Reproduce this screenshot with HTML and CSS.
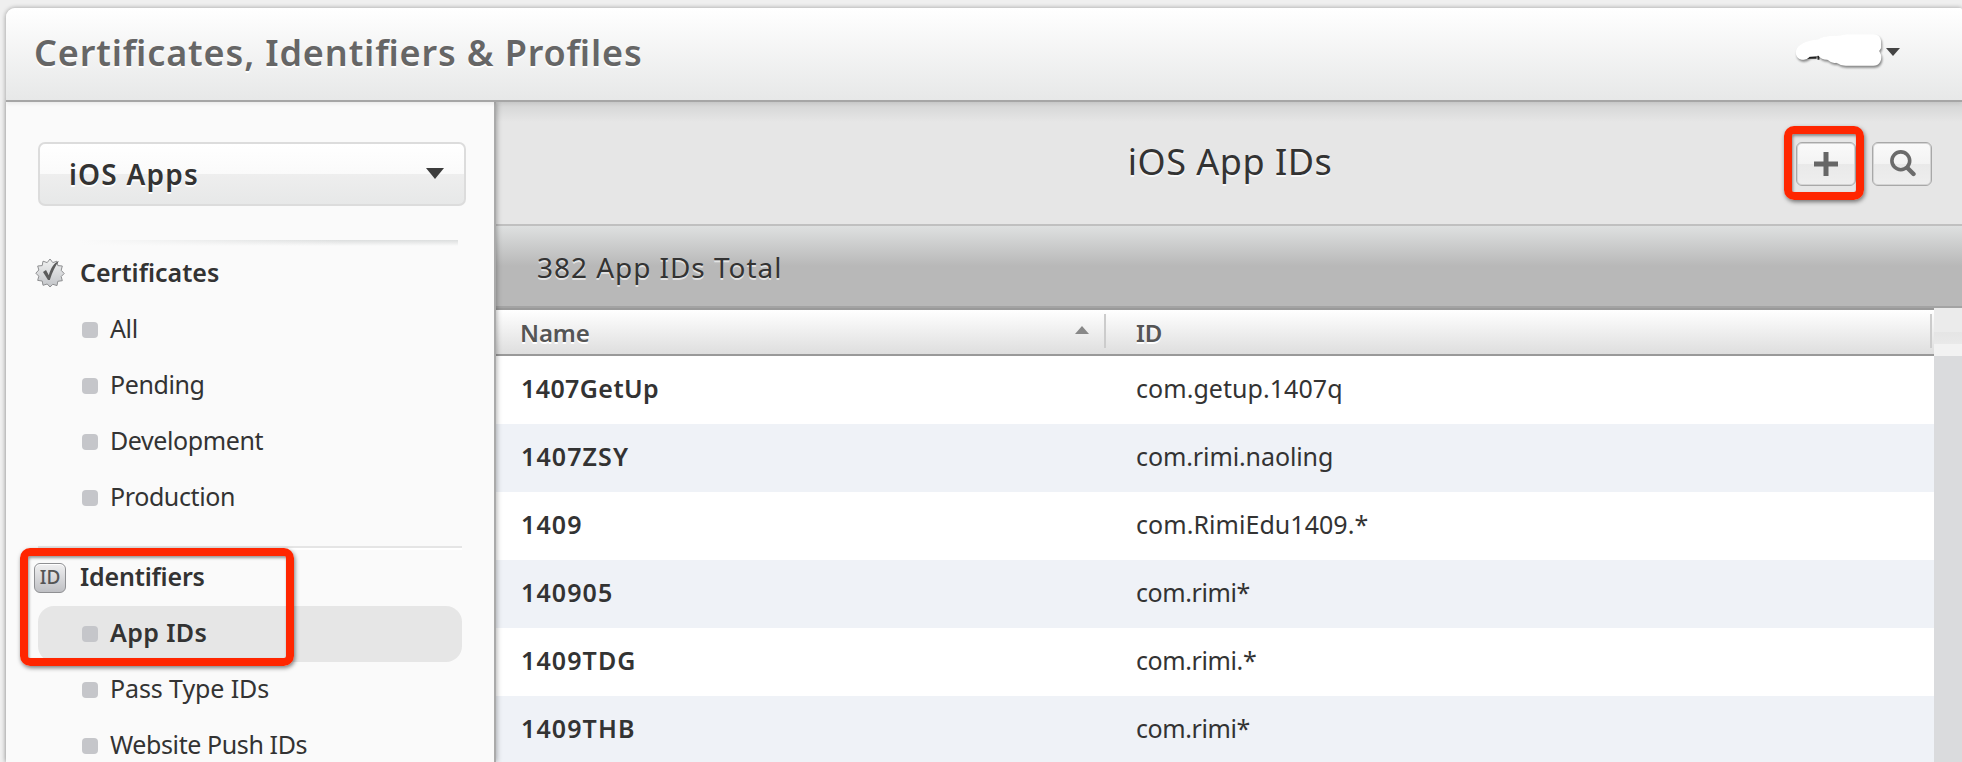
FILE: index.html
```html
<!DOCTYPE html>
<html lang="en">
<head>
<meta charset="utf-8">
<title>Certificates, Identifiers &amp; Profiles</title>
<link rel="stylesheet" href="styles.css">
</head>
<body>
<div class="portal">
  <header class="topbar">
    <h1>Certificates, Identifiers &amp; Profiles</h1>
    <div class="account">
      <svg class="account-name" width="94" height="40" viewBox="0 0 94 40">
        <path d="M12 27h11v2h-13zM24 25h2v5h-2z" fill="#333"/>
        <path class="blob" d="M8 30C1 29 0 20 5 16C11 11 18 10 25 9C31 5 42 6 48 5L54 4H81C87 4 89 8 89 12V18L87 21L89 25C90 31 87 36 81 36H53C47 36 46 34 43 33C39 34 36 31 34 30C30 30 27 29 25 26L16 27C13 30 11 30 8 30Z" fill="#fff"/>
      </svg>
      <svg width="14" height="8" viewBox="0 0 14 8"><path d="M0 0h14L7 8z" fill="#444"/></svg>
    </div>
  </header>
  <div class="columns">
    <nav class="sidebar">
      <div class="platform"><span>iOS Apps</span><svg width="18" height="11" viewBox="0 0 18 11"><path d="M0 0h18l-9 11z" fill="#3c3c3c"/></svg></div>
      <div class="fade-rule"></div>
      <section>
        <h2><svg class="badge" width="30" height="30" viewBox="0 0 30 30">
          <defs><linearGradient id="seal" x1="0" y1="0" x2="0" y2="1"><stop offset="0" stop-color="#f1f2f2"/><stop offset="1" stop-color="#c2c4c8"/></linearGradient></defs>
          <path d="M15 1l2.800 3.600L22 3.200l.8 4.400 4.500.4-1.100 4.300 3 3.200-3 3 1.100 4.200-4.500.6-.8 4.300-4.200-1.300L15 29l-2.800-3-4.200 1.300-.8-4.300-4.500-.6 1.100-4.200-3-3 3-3.200L2.700 8l4.500-.4L8 3.200l4.200 1.400z" fill="url(#seal)" stroke="#8e8f91" stroke-width="1"/>
          <path d="M8 14l3-2 2.800 5.200C16 10 18.500 5 24 3C20 8 17.500 14 14.800 22H13z" fill="#5b5b5b"/>
        </svg>Certificates</h2>
        <ul>
          <li>All</li>
          <li>Pending</li>
          <li>Development</li>
          <li>Production</li>
        </ul>
      </section>
      <div class="rule"></div>
      <section>
        <h2 class="tight"><span class="id-icon">ID</span>Identifiers</h2>
        <ul>
          <li class="selected">App IDs</li>
          <li class="even">Pass Type IDs</li>
          <li>Website Push IDs</li>
        </ul>
        <div class="callout callout-menu"></div>
      </section>
    </nav>
    <main class="content">
      <div class="title-bar">
        <h2>iOS App IDs</h2>
        <div class="actions">
          <div class="button"><svg width="24" height="24" viewBox="0 0 24 24"><path d="M9.500 0h5v9.500H24v5h-9.500V24h-5v-9.500H0v-5h9.500z" fill="#666"/></svg><div class="callout callout-add"></div></div>
          <div class="button"><svg class="search" width="26" height="27" viewBox="0 0 26 27"><circle cx="10.800" cy="10.800" r="8.900" fill="none" stroke="#6b6b6b" stroke-width="3.600"/><path d="M17.500 18l6 6" stroke="#6b6b6b" stroke-width="4.400" stroke-linecap="round"/></svg></div>
        </div>
      </div>
      <div class="total">382 App IDs Total</div>
      <div class="table-area">
        <div class="table">
          <div class="row head"><div class="name">Name<svg width="14" height="8" viewBox="0 0 14 8"><path d="M7 0l7 8H0z" fill="#888"/></svg></div><div class="ident">ID</div></div>
          <div class="row"><div class="name mixed">1407GetUp</div><div class="ident">com.getup.1407q</div></div>
          <div class="row"><div class="name">1407ZSY</div><div class="ident medium">com.rimi.naoling</div></div>
          <div class="row"><div class="name">1409</div><div class="ident">com.RimiEdu1409.*</div></div>
          <div class="row"><div class="name">140905</div><div class="ident short">com.rimi*</div></div>
          <div class="row"><div class="name">1409TDG</div><div class="ident short">com.rimi.*</div></div>
          <div class="row"><div class="name">1409THB</div><div class="ident short">com.rimi*</div></div>
        </div>
        <div class="scroll"><div class="scroll-head"></div><div class="scroll-track"></div></div>
      </div>
    </main>
  </div>
</div>
</body>
</html>
```
FILE: styles.css
```css
* { box-sizing: border-box; }
html, body { height: 762px; overflow: hidden; }
body { margin: 0; padding: 8px 0 0 6px; background: #efefef; color: #333; font: 25px "Noto Sans", "Open Sans", sans-serif; }
h1, h2, ul { margin: 0; padding: 0; list-style: none; }
svg { display: block; flex: none; }

.portal { display: flex; flex-direction: column; height: 754px; border-radius: 9px 2px 0 0; box-shadow: 0 0 5px rgba(0,0,0,.3); }
.topbar { position: relative; z-index: 3; display: flex; flex: none; justify-content: space-between; align-items: center; height: 94px; padding: 0 62px 4px 28px; border-bottom: 2px solid #a6a6a6; border-radius: 9px 2px 0 0; background: linear-gradient(#fff, #e7e8e8); box-shadow: 0 1px 5px rgba(0,0,0,.09); }
.topbar h1 { font-size: 36px; font-weight: 600; letter-spacing: .87px; color: #666; text-shadow: 0 2px 0 #fff; font-feature-settings: "liga" 1; }
.account { display: flex; align-items: center; height: 40px; margin-top: -1px; }
.account-name { width: 92px; margin-top: -3px; }
.blob { filter: drop-shadow(1px 2px 1px rgba(0,0,0,.45)); }

.columns { display: flex; flex: 1; min-height: 0; }
.sidebar { position: relative; z-index: 2; flex: none; width: 490px; padding: 40px 34px 0 32px; border-right: 2px solid #aaa; background: #fafafa; box-shadow: 1px 0 5px rgba(0,0,0,.3); }
.platform { display: flex; align-items: center; justify-content: space-between; width: 428px; height: 64px; padding: 0 20px 1px 29px; border: 2px solid #dcdcdc; border-radius: 7px; background: linear-gradient(#fff, #fafafa 50%, #eeeeee 50%, #e7e8e8); font-size: 28px; font-weight: 600; letter-spacing: 1.2px; text-shadow: 0 2px 0 #fff; }
.fade-rule { width: 378px; height: 6px; margin: 34px 0 0 42px; background: linear-gradient(90deg, #fafafa, rgba(250,250,250,0) 70%), linear-gradient(#dcdede, #fafafa); }
.rule { width: 424px; height: 4px; margin-top: 20px; border-top: 2px solid #e5e5e5; background: #fff; }
section { position: relative; }
section h2 { display: flex; align-items: center; height: 56px; padding-bottom: 5px; font-size: 25px; font-weight: 600; }
section h2.tight { letter-spacing: -.2px; }
.badge { margin: 3px 15px 0 -3px; }
.id-icon { display: flex; align-items: center; justify-content: center; width: 32px; height: 30px; margin: 5px 14px 0 -4px; border: 1px solid #8f9093; border-radius: 6px; background: linear-gradient(#f0f0f1, #bfc0c4); box-shadow: inset 0 1px 0 #fff; color: #555; font-size: 19px; font-weight: 500; line-height: 26px; padding-bottom: 2px; letter-spacing: 0; }
li { display: flex; align-items: center; width: 424px; height: 56px; padding: 0 0 4px 44px; letter-spacing: -.4px; }
li::before { content: ""; width: 16px; height: 16px; margin: 4px 12px 0 0; border-radius: 4px; background: #c5c6ca; }
li.even { letter-spacing: -.1px; }
li.selected { border-radius: 16px; background: #e6e6e6; font-weight: 600; letter-spacing: .4px; }

.callout { position: absolute; border: 8px solid #ff2600; border-radius: 10px; box-shadow: 1px 2px 4px rgba(0,0,0,.5), inset 1px 2px 3px rgba(0,0,0,.4); }
.callout-menu { left: -18px; top: -2px; width: 274px; height: 118px; }
.callout-add { left: -13px; top: -17px; width: 80px; height: 74px; }

.content { flex: 1; min-width: 0; }
.title-bar { display: grid; grid-template-columns: 1fr auto 1fr; align-items: center; height: 124px; border-bottom: 2px solid #c0c0c0; background: linear-gradient(#d3d4d4, #e6e6e6 20px); }
.title-bar h2 { grid-column: 2; padding: 0 0 4px 2px; font-size: 36px; font-weight: 400; letter-spacing: .5px; text-shadow: 0 2px 0 #f8f8f8; }
.actions { display: flex; gap: 16px; justify-content: flex-end; padding: 2px 30px 0 0; }
.button { position: relative; display: flex; align-items: center; justify-content: center; width: 60px; height: 44px; border: 1px solid #a8a8a8; border-radius: 6px; background: linear-gradient(#fafafa, #f3f3f3 50%, #e9e9e9 50%, #eee); box-shadow: inset 0 0 0 1px #d4d4d4; }
.search { margin: -2px 0 0 2px; }
.total { display: flex; align-items: center; height: 82px; padding: 2px 0 0 41px; border-bottom: 2px solid #a3a3a3; background: linear-gradient(#dee0e0, #b8b8b8 50%); font-size: 28px; letter-spacing: .95px; text-shadow: 0 2px 0 rgba(255,255,255,.6); }
.table-area { display: flex; height: 454px; }
.table { width: 1438px; border-top: 2px solid #999; }
.row { display: flex; align-items: center; height: 68px; padding: 0 0 4px 25px; background: #fff; }
.row:nth-child(odd) { background: #eff2f7; }
.name { display: flex; align-items: center; justify-content: space-between; width: 585px; padding-right: 15px; font-weight: 600; letter-spacing: 1.1px; }
.name.mixed { letter-spacing: .4px; }
.ident { flex: 1; padding-left: 30px; letter-spacing: .05px; }
.ident.medium { letter-spacing: -.1px; }
.ident.short { letter-spacing: -.4px; }
.row.head { height: 46px; padding: 0 0 0 24px; border-bottom: 2px solid #999; background: linear-gradient(#fff, #dedede); color: #555; font-size: 24px; font-weight: 600; text-shadow: 0 2px 0 #fff; }
.head .name, .head .ident { height: 34px; margin-bottom: 2px; border-right: 2px solid #ccc; letter-spacing: -.1px; line-height: 37px; }
.head .name { width: 586px; padding-top: 2px; }
.head .name svg { margin-top: -4px; }
.head .ident { margin-right: 2px; }
.scroll { display: flex; flex: 1; flex-direction: column; }
.scroll-head { height: 48px; background: linear-gradient(#ebebeb 24px, #e5e5e5 24px, #e9e9e9 36px, #f2f2f2 36px); }
.scroll-track { flex: 1; background: #dadbdd; }
```
